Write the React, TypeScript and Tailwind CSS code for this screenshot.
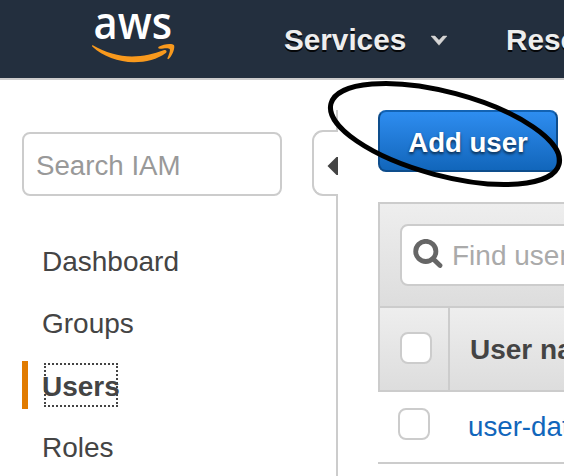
import React from "react";

const navItems = [
  { label: "Dashboard" },
  { label: "Groups" },
  { label: "Users", active: true },
  { label: "Roles" },
];

function AwsLogo() {
  return (
    <svg className="block h-[56px] w-[90px] shrink-0 overflow-visible" viewBox="88 10 90 56" role="img" aria-label="aws">
      <text
        x="93.5"
        y="38.5"
        textLength="78.5"
        lengthAdjust="spacingAndGlyphs"
        className="fill-white font-['Open_Sans',sans-serif] text-[46px] font-semibold"
      >
        aws
      </text>
      <path
        d="M92.8 45.3 C105 52.6 119 56.4 132 56.4 C143 56.4 154 53.9 163.5 50.2 C165.8 49.3 167.8 51.5 165.8 53 C157.5 59.3 146 62.2 134 62.2 C118 62.2 103 56.4 92.5 46.8 C91.6 46 92 44.9 92.8 45.3 Z"
        fill="#f8991d"
      />
      <path
        d="M158.7 46.8 C163 43.6 172.7 43.1 173.9 45 C175.3 47.3 173 54.9 168.9 58.8 C168 59.5 167.1 59 167.5 58 C168.7 55.3 170.6 50.3 169.7 49 C168.6 47.6 163.4 48.4 160.3 48.8 C158.2 49 157.6 47.8 158.7 46.8 Z"
        fill="#f8991d"
      />
    </svg>
  );
}

function Header() {
  return (
    <header className="flex h-20 shrink-0 items-start border-b-2 border-[#ccc] bg-[#232f3e] pl-[88px] pt-[10px]">
      <AwsLogo />
      <nav className="ml-[106px] flex h-[60px] items-center whitespace-nowrap text-[29.7px] font-bold text-[#eee] [text-shadow:0_2px_0_rgba(0,0,0,0.85)]">
        <span className="w-[123px]">Services</span>
        <svg className="ml-[22px] mr-[57px] mt-[2px] block h-[14px] w-[20px]" viewBox="0 0 20 14">
          <path d="M1 1.5 H7 L10 5 L13 1.5 H19 L10 12 Z" fill="#111" opacity="0.35" />
          <path d="M2 2 H6 L10 6.3 L14 2 H18 L10 11.3 Z" fill="#d5d5d5" stroke="#d5d5d5" strokeWidth="0.5" />
        </svg>
        <span>Resource Groups</span>
      </nav>
    </header>
  );
}

function Sidebar() {
  return (
    <aside className="w-[312px] shrink-0 pt-[52px]">
      <div className="ml-[22px] flex h-16 w-[260px] items-center rounded-lg border-2 border-[#ccc] bg-white px-3 pt-[4px] text-[27.7px] text-[#999]">
        Search IAM
      </div>
      <ul className="mt-[34px] text-[#444]">
        {navItems.map((item) => (
          <li key={item.label} className="flex h-[62px] items-center">
            {item.active ? (
              <>
                <span className="ml-[22px] mr-[16px] h-12 w-[6px] bg-[#e17b00]" />
                <span className="h-11 w-[74px] border-2 border-dotted border-[#444]">
                  <b className="-ml-[4px] block leading-[44px]">{item.label}</b>
                </span>
              </>
            ) : (
              <span className="pl-[42px] pt-[2px]">{item.label}</span>
            )}
          </li>
        ))}
      </ul>
    </aside>
  );
}

function CollapseHandle() {
  return (
    <div className="flex w-[26px] shrink-0 flex-col pt-[30px]">
      <div className="ml-6 h-[22px] w-[2px] bg-[#ccc]" />
      <div className="-mt-[2px] flex h-[66px] items-center justify-end rounded-l-[11px] border-y-2 border-l-2 border-[#ccc] bg-white pt-[6px]">
        <svg className="block h-[20px] w-[11px]" viewBox="0 0 11 20">
          <path d="M0.5 10 L9.5 1 H11 V19 H9.5 Z" fill="#444" />
        </svg>
      </div>
      <div className="-mt-[2px] ml-6 flex-1 bg-[#ccc]" />
    </div>
  );
}

function Checkbox() {
  return <span className="h-8 w-8 shrink-0 rounded-lg border-2 border-[#ccc] bg-white" />;
}

function UsersTable() {
  return (
    <section className="mt-[30px] w-[500px] whitespace-nowrap">
      <div className="h-[106px] border-2 border-[#ccc] bg-gradient-to-b from-[#eee] to-[#ddd] pl-5 pt-5">
        <div className="flex h-[62px] w-[400px] items-center rounded-lg border-2 border-[#ccc] bg-white pl-[11px] text-[#aaa]">
          <svg className="mr-[9px] block h-[32px] w-[30px]" viewBox="0 0 30 32">
            <circle cx="12.8" cy="12.4" r="10.1" fill="none" stroke="#666" strokeWidth="4.8" />
            <path d="M20 19.7 L27 26.5" stroke="#666" strokeWidth="4.8" strokeLinecap="round" />
          </svg>
          <span className="pt-[2px]">Find users by username</span>
        </div>
      </div>
      <div className="flex h-[84px] items-stretch border-b-2 border-l-2 border-[#ccc] bg-gradient-to-b from-[#eee] to-[#ddd]">
        <div className="flex w-[70px] shrink-0 items-center border-r-2 border-[#ccc] pl-5 pb-[2px]">
          <Checkbox />
        </div>
        <div className="flex items-center pl-5 pt-[2px] font-bold text-[#444]">User name</div>
      </div>
      <div className="flex h-[72px] items-center border-b-2 border-[#ccc] pl-5">
        <span className="flex pb-[6px]"><Checkbox /></span>
        <span className="ml-[38px] text-[27.7px] text-[#1166bb]">user-data</span>
      </div>
    </section>
  );
}

export default function App() {
  return (
    <div className="relative flex h-[476px] w-[564px] flex-col overflow-hidden bg-white font-['Liberation_Sans',Arial,sans-serif] text-[28px] leading-none">
      <Header />
      <div className="flex min-h-0 flex-1">
        <Sidebar />
        <CollapseHandle />
        <main className="ml-10 w-[186px] shrink-0 overflow-hidden pt-[30px]">
          <button className="flex h-[62px] w-[180px] items-center justify-center whitespace-nowrap rounded-lg border-2 border-[#0e4d8c] border-t-[#1262b3] bg-gradient-to-b from-[#2e8df0] to-[#1166bb] pt-[3px] text-[27.6px] font-bold leading-none text-white [text-shadow:0_2px_3px_rgba(0,0,0,0.65)]">
            Add user
          </button>
          <UsersTable />
        </main>
      </div>
      <svg className="pointer-events-none absolute inset-0 h-full w-full" viewBox="0 0 564 476">
        <ellipse cx="445" cy="134" rx="118" ry="41.7" transform="rotate(14.9 445 134)" fill="none" stroke="#000" strokeWidth="5" />
      </svg>
    </div>
  );
}
